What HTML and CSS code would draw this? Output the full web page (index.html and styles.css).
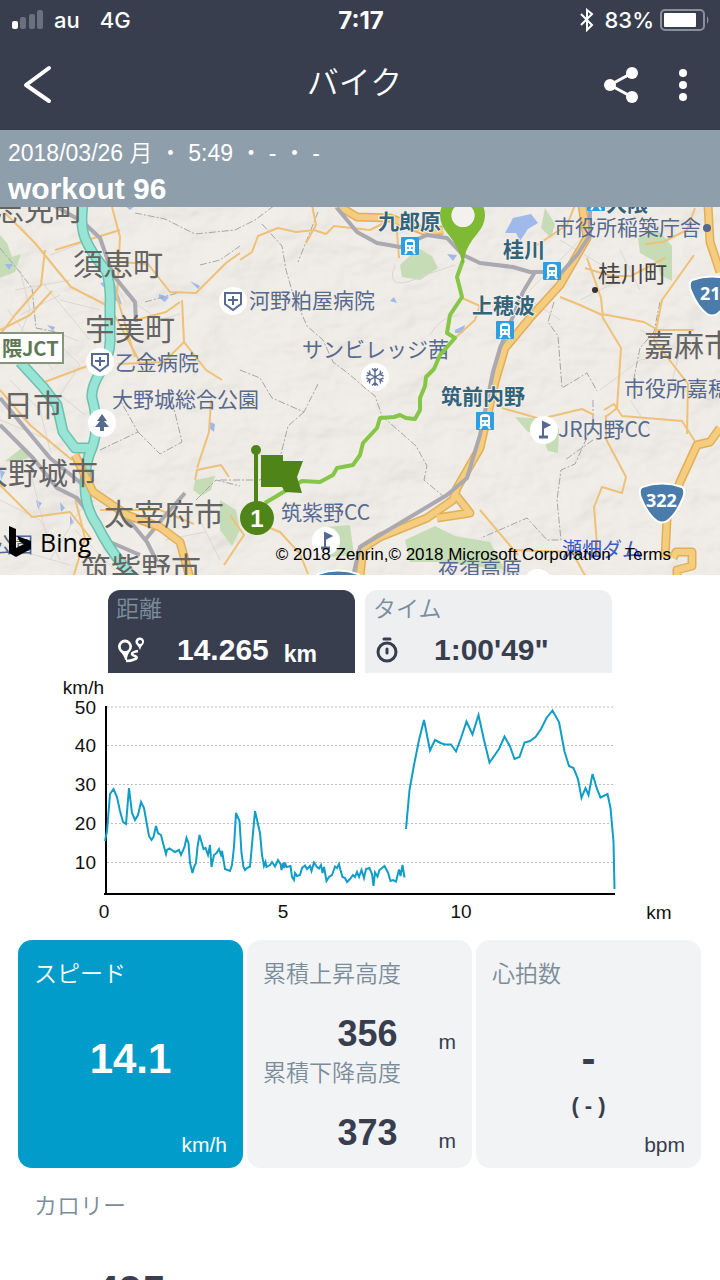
FILE: index.html
```
<!DOCTYPE html>
<html lang="ja">
<head>
  <meta charset="UTF-8">
  <title>バイク - workout 96</title>
  <meta name="viewport" content="width=device-width, initial-scale=1.0">
  <link rel="stylesheet" href="styles.css">
</head>
<body>
<div class="status">
  <div class="status-left">
    <svg width="32" height="20" viewBox="0 0 32 20">
      <rect x="0" y="11" width="6" height="8" rx="2" fill="#fff"/>
      <g fill="#6b707d"><rect x="8" y="7" width="6" height="12" rx="2"/><rect x="17" y="4" width="6" height="15" rx="2"/><rect x="25" y="0" width="6" height="19" rx="2"/></g>
    </svg>
    <span>au</span><span class="net">4G</span>
  </div>
  <time>7:17</time>
  <div class="status-right">
    <svg width="14" height="24" viewBox="0 0 14 24" fill="none" stroke="#fff" stroke-width="2"><path d="M1 6l11 11-5 5V2l5 4L1 17"/></svg>
    <span>83%</span>
    <svg width="50" height="22" viewBox="0 0 50 22">
      <rect x="1" y="1" width="43" height="20" rx="4" fill="none" stroke="#8b8f99" stroke-width="2"/>
      <rect x="4" y="4" width="32" height="14" rx="1" fill="#fff"/>
      <path d="M47 7q3 4 0 8z" fill="#8b8f99"/>
    </svg>
  </div>
</div>

<header>
  <button class="back" aria-label="戻る"><svg width="30" height="40" viewBox="0 0 30 40"><path d="M27 3L4 20l23 16" fill="none" stroke="#fff" stroke-width="4" stroke-linecap="round" stroke-linejoin="round"/></svg></button>
  <h1>バイク</h1>
  <div class="actions">
    <button aria-label="共有"><svg width="36" height="38" viewBox="0 0 36 38"><path d="M29 7L7 19l22 12" fill="none" stroke="#fff" stroke-width="3"/><g fill="#fff"><circle cx="29" cy="7" r="6"/><circle cx="7" cy="19" r="6"/><circle cx="29" cy="31" r="6"/></g></svg></button>
    <button aria-label="メニュー"><svg width="8" height="32" viewBox="0 0 8 32" fill="#fff"><circle cx="4" cy="4" r="4"/><circle cx="4" cy="16" r="4"/><circle cx="4" cy="28" r="4"/></svg></button>
  </div>
</header>

<main>
<section class="info">
  <p>2018/03/26 月 ・ 5:49 ・ - ・ -</p>
  <h2>workout 96</h2>
</section>

<section class="map">
  <svg class="map-tiles" viewBox="0 207 720 368">
    <defs>
      <filter id="relief" x="0" y="0" width="100%" height="100%">
        <feTurbulence type="fractalNoise" baseFrequency="0.014 0.02" numOctaves="4" seed="8"/>
        <feDiffuseLighting surfaceScale="10" lighting-color="#fffaf2"><feDistantLight azimuth="225" elevation="62"/></feDiffuseLighting>
      </filter>
      <g id="spot"><circle r="14" fill="#fff"/></g>
      <g id="hospital"><use href="#spot"/><path d="M-8-8H8V3L0 9-8 3zM0-5V4M-5-1H5" fill="none" stroke="#56698f" stroke-width="2"/></g>
      <g id="golf"><use href="#spot"/><path d="M-1 7V-8L5-5-1-2" fill="#56698f" stroke="#56698f" stroke-width="2"/><path d="M-5 7H4" stroke="#56698f" stroke-width="3"/></g>
      <g id="train"><rect x="-9" y="-9" width="18" height="18" rx="1" fill="#2a9fe6"/><path d="M-5 5V-4q0-3 5-3t5 3V5z" fill="#fff"/><path d="M-3-4H3V-1H-3z" fill="#2a9fe6"/><path d="M-3 5l-2 3M3 5l2 3" stroke="#fff" stroke-width="2"/><circle cx="-2" cy="2" r="1" fill="#2a9fe6"/><circle cx="2" cy="2" r="1" fill="#2a9fe6"/></g>
      <path id="shield" d="M-20-15Q0-22 20-15Q24-12 21-4Q14 13 5 19Q0 22-5 19Q-14 13-21-4Q-24-12-20-15z" fill="#4a7cab" stroke="#fff" stroke-width="2"/>
    </defs>
    <rect y="207" width="720" height="368" fill="#efece7"/>
    <rect y="207" width="720" height="368" filter="url(#relief)" opacity=".16"/>

    <g fill="#c5dcb6">
      <path d="M0 235l7 8 5 14 9-3-6 18-15 6zM400 265l18-17 14 8 6 12-18 12-18-3zM638 238l20-8 14 16v35l-12-6-2-12-18-10zM545 208l10 16-4 14-10-10zM515 417l30 2 14 10-1 24-10-2-5-12-16-8zM195 480l20-4-4 14-10 6-8-6zM220 500l16 10 4 20-8 16-12-16zM325 527l25-2 4 30-24 2zM405 540l30-14 20 10 35 6 15 28-65-8-30 0z"/>
      <path d="M5 461l18-14 6 11-15 4z"/>
    </g>
    <g fill="#9fb9ea">
      <path d="M505 233l8-15 18-4 7 9-10 6-8 12-4-8zM100 283l14-2 8 24-8-6zM159 294l10 3-4 5-6-4zM190 281l10 5-2 3zM447 254l10 1-4 6zM210 422l5 2-1 8-5-4zM390 301l4-4 3 6zM455 330l10-5-2 8-8 0zM47 325l8 2-2 4zM5 264l8 0-4 6z"/>
      <path d="M36 500l6 3-4 6zM60 502l5 6-4 4zM70 515l4 8-4 2zM0 470l5 2-4 8zM124 205l12 0-6 5z"/>
    </g>

    <g class="minor">
      <path d="M50 255l32-12 20 18 24 42M0 345l30 12 28-24 20 8M20 270l10 40-12 30M60 345l20 20-20 30 25 20M10 380l30 30 10 40M130 300l30 20 20-6M0 500l40 20 20 40M30 470l20 80M50 560l30-50 15-10M75 530l40 40M60 300l40 10M15 290l55-10M20 225l40 50"/>
      <path d="M395 265q-12 30 30 10l30-10M430 335q10-18 28-20M580 300l40-20M530 300l30 20M640 330l40 20-10 40M600 390l40-30 30-5M560 240l50 30M620 250l20 40M660 380l50 20M590 230l-60 60M650 430l-20-30M20 315l40-20M8 310l45 60M90 340l-50-60M165 540l40-8M200 520l20 40M0 420l50 20M0 545l70 20"/>
    </g>
    <g class="border">
      <path d="M135 213l30 6 30 15 40-4 20-10 20-15"/>
      <path d="M262 224l20 22 4 24 7 24 14 32 16 14 10 22 16 12 16 14 10 8 7 20 34 30 11 20-3 14 20 17 25 10"/>
      <path d="M0 248l18 22 14 18 4 40 20 4M100 450l38-18-18-32M138 432l22 22 22-12-12-50M318 212l-20 50M240 370l20 8 12 20 32 14 14-28M304 412l-16 14-8 32-20 22H220"/>
      <path d="M554 302l-6 20 10 14 4 52 25-15 10 18M660 302l-6 30-14 16-6 30M593 400v24l-18 40-14 6-4 30 4 40-14 0-20-22-46 20M593 440l-28 20M200 265l20-5 20-14M145 302l36-10M196 500l20-20 24 6"/>
    </g>
    <g class="road">
      <path d="M5 213l30 30 36 44 39 20 30 55M45 250l-4 35-26 30-15 20M112 207l8 30-3 60 18 60M55 250l65-20M120 262l28 2 22 28 26 1 30-30 14-10M180 302l-14 10-30 8M182 300l2 42-20 20-46 2M184 342l22 28 16 10"/>
      <path d="M211 400l-2 32-12 36M195 480l2-10 24-5 8 12M0 485l32 32 38-5 22 28M100 510l60 0 34 14M250 520l30 12 20 22 8 20M240 260l12-8 6-16 20-8 18 4 18-2 12 4 8-8 36 4 20-10M312 205l4 20-10 18M397 232l2 26M462 298l18 8M455 338l20-18 5-15"/>
      <path d="M575 205l-8 20-30 20M585 268l26 8 20 0 34-18M560 297l20 8 22 10M587 258l14 40 2 20 18 30-4 60-10 8M602 314l42 8 14 8 36 0M694 255l-32 45-8 40 34 44-1 50M695 208l-8 22-24 12-18 2M604 410l10-6 8 12 60 5 14 22M606 415l0 24 20 38-4 16-20-6-8 20 4 50M594 415l-12-6-42 10-20-6-18-5M480 510l38 45M510 550l62 2 20 36"/>
      <path d="M0 390l30 35 42 35M0 330l30-15 22-24M90 365l-48 18M75 498l10 40-12 40M230 515l14 20-20 30"/>
    </g>

    <g class="rail">
      <path d="M53 205l30 17 17 16 13 37 22 27 1 20M0 425l33 33 24 30 20 10 33 44 30 13M0 398l50 60 37 30 16 9 30 28 14 17 10 20M145 540l18-22 22-25"/>
    </g>
    <g class="highway">
      <path class="case" d="M83 205q-3 20 2 33t22 34q4 16 3 33v30q2 20-13 43-6 12-5 20 8 28 0 50-7 14-7 37t12 40q12 24 26 40l12 16M20 362l23 25 14 18 6 27 12 16h17"/>
      <path d="M83 205q-3 20 2 33t22 34q4 16 3 33v30q2 20-13 43-6 12-5 20 8 28 0 50-7 14-7 37t12 40q12 24 26 40l12 16M20 362l23 25 14 18 6 27 12 16h17"/>
    </g>
    <g class="trunk">
      <path class="case" d="M75 455l18 37 34 23 33 12 20 15 10 36M337 205l20 12 33 1 37 14 16-2M582 205l5 33-27 47-30 33-25 30-10 34-15 66-23 40-4 12-26 18-47 19-17 11-3 28M455 494l15 19-33 5M708 205l2 37 10 30M720 428l-10 14-13 3-17 37-13 36-2 40M673 558l3-6h16v14l-15 4v8"/>
      <path d="M75 455l18 37 34 23 33 12 20 15 10 36M337 205l20 12 33 1 37 14 16-2M582 205l5 33-27 47-30 33-25 30-10 34-15 66-23 40-4 12-26 18-47 19-17 11-3 28M455 494l15 19-33 5M708 205l2 37 10 30M720 428l-10 14-13 3-17 37-13 36-2 40M673 558l3-6h16v14l-15 4v8"/>
    </g>
    <g class="rail">
      <path d="M337 208l20 24 20 11 23 4 27-12 20 3 16 17 17 8 33 4 17 5h32l15-17 13-20v-30M535 272l-12 20-23 56-7 24-6 30-7 33-13 43-20 17-87 52-7 29"/>
    </g>

    <g class="city">
      <text x="-6" y="220">志免町</text>
      <text x="73" y="275">須恵町</text>
      <text x="85" y="340">宇美町</text>
      <text x="3" y="416">日市</text>
      <text x="-22" y="484">大野城市</text>
      <text x="104" y="525">太宰府市</text>
      <text x="81" y="579">筑紫野市</text>
      <text x="644" y="356">嘉麻市</text>
    </g>
    <text class="town" x="598" y="282">桂川町</text>
    <circle cx="595" cy="290" r="3" fill="#333"/>
    <g class="poi">
      <text x="249" y="308">河野粕屋病院</text>
      <text x="115" y="370">乙金病院</text>
      <text x="112" y="407">大野城総合公園</text>
      <text x="302" y="357">サンビレッジ茜</text>
      <text x="554" y="235">市役所稲築庁舎</text>
      <text x="624" y="396">市役所嘉穂</text>
      <text x="558" y="437">JR内野CC</text>
      <text x="281" y="520">筑紫野CC</text>
      <text x="438" y="577">夜須高原</text>
      <text x="-9" y="552">公園</text>
      <text class="dam" x="562" y="557">瀬畑ダム</text>
    </g>
    <circle cx="707" cy="228" r="4" fill="#56698f"/>
    <g class="station">
      <text x="378" y="229">九郎原</text>
      <text x="503" y="257">桂川</text>
      <text x="472" y="313">上穂波</text>
      <text x="441" y="404">筑前内野</text>
      <text x="606" y="211">大隈</text>
    </g>
    <use href="#train" x="410" y="246"/>
    <use href="#train" x="552" y="271"/>
    <use href="#train" x="505" y="330"/>
    <use href="#train" x="485" y="421"/>
    <use href="#train" x="596" y="202"/>
    <use href="#hospital" x="233" y="301"/>
    <use href="#hospital" x="100" y="362"/>
    <use href="#golf" x="544" y="430"/>
    <use href="#golf" x="326" y="541"/>
    <use href="#spot" x="102" y="423"/>
    <path d="M102 414l5 7h-3l5 6h-5v4h-4v-4h-5l5-6h-3z" fill="#56698f"/>
    <use href="#spot" x="375" y="377"/>
    <use href="#spot" x="538" y="583"/>
    <path d="M375 368v18M367 372.500l16 9M367 381.500l16-9M372 368.500l3 3 3-3M372 385.500l3-3 3 3M366.500 376l3.500-1.500-.5-4M383.500 376l-3.500-1.500.5-4M366.500 378l3.500 1.500-.5 4M383.500 378l-3.500 1.500.5 4" fill="none" stroke="#56698f" stroke-width="1.400"/>
    <rect x="-6" y="333" width="69" height="30" fill="#fff" stroke="#86967a" stroke-width="2"/>
    <text class="jct" x="2" y="356">隈JCT</text>
    <use href="#shield" x="662" y="502"/>
    <use href="#shield" x="712" y="295"/>
    <use href="#shield" x="338" y="589"/>
    <text class="route-no" x="646" y="507">322</text>
    <text class="route-no" x="700" y="300">211</text>

    <path class="track" d="M463 260l-6 17 5 20-12 18-3 18 8 5-15 17-6 14-8 8-1 9-5 12v12l-5 9-9-1-6-3-6 2-14 1-3 10-14 15-3 12-7 10-16 3-4 7-13 7-18-1-37 22"/>
    <path d="M462 263Q460 249 448 234Q440 225 440 215A22.500 22.500 0 0 1 485 215Q485 225 477 234Q464 249 464 263zM463 204a11.500 11.500 0 1 0 .1 0z" fill="#7fba35" fill-rule="evenodd"/>
    <circle cx="463" cy="215.500" r="11.500" fill="#f3f1ed"/>
    <g fill="#4f8518"><path d="M254 450h4v55h-4zM261 455h22v6h20l-6 16 5 16-17-1-3-5h-21z"/><circle cx="256" cy="450" r="5"/><circle cx="257" cy="518" r="17"/></g>
    <text class="lap" x="257" y="527">1</text>
  </svg>
  <div class="bing">
    <svg width="24" height="32" viewBox="0 0 24 32"><path d="M1 0l7 3v19l8-4-4-2-3-6 14 5v8L8 31l-7-4z"/></svg>
    <span>Bing</span>
  </div>
  <div class="credits"><span>© 2018 Zenrin,© 2018 Microsoft Corporation</span><a href="#terms">Terms</a></div>
</section>

<div class="tabs">
  <button class="tab active">
    <span class="label">距離</span>
    <span class="row">
      <svg width="28" height="26" viewBox="0 0 28 26"><path d="M9 23Q8 18 4 14.500A7 7 0 1 1 14 14.500Q11 18 11 23zM9 5.500a4.300 4.300 0 1 0 .1 0zM24 13Q23 10 21 8A4.300 4.300 0 1 1 26.500 8Q24.500 10 24 13zM24 3a2 2 0 1 0 .1 0z" fill="#fff" fill-rule="evenodd"/><path d="M22 14q-6 1-6 3 0 1 3 2 4 2-1 3.500-3 1.500-8 1.500" fill="none" stroke="#fff" stroke-width="2.600"/></svg>
      <strong>14.265</strong><small>km</small>
    </span>
  </button>
  <button class="tab">
    <span class="label">タイム</span>
    <span class="row">
      <svg width="28" height="26" viewBox="0 0 28 26" fill="none" stroke="#383e4e"><circle cx="14" cy="15" r="9" stroke-width="3"/><path d="M11 2h6M14 12v4" stroke-width="3" stroke-linecap="round"/></svg>
      <strong>1:00'49"</strong>
    </span>
  </button>
</div>

<svg class="chart" viewBox="0 673 720 260">
  <path class="grid" d="M107 707H615M107 745.500H615M107 784.500H615M107 823.500H615M107 862.500H615"/>
  <g class="ylabels">
    <text x="104" y="694">km/h</text>
    <text x="96" y="714">50</text>
    <text x="96" y="752">40</text>
    <text x="96" y="791">30</text>
    <text x="96" y="830">20</text>
    <text x="96" y="869">10</text>
  </g>
  <g class="xlabels">
    <text x="104" y="918">0</text>
    <text x="283" y="918">5</text>
    <text x="461" y="918">10</text>
    <text x="659" y="919">km</text>
  </g>
  <path class="axis" d="M106 706V894M104 894H615"/>
  <polyline points="105,841 107,831 110,794 113.5,789 117,797 120,811 123,822 126,824 129,788 132,813 135,820 138,815 141,802 144,808 147,825 149,836 151.5,840 153.5,837 156,826 158,833 161,835 163,843 166,854 167,850 169.5,848.5 175,852 179,850 181,855 184.5,847 186.5,838 188.5,843 190,863 192.5,873 194,867 196,863 197.5,847 199.5,835 201.5,842 203.5,849 205.5,848 208,855 210,845 211.5,867 214,855 216.5,853 219,849 221,855 222,851 225,869 230,871 232,865 234,847 236,813 239.5,821 241.5,853 243.5,867 245,870 247,868 250,866.5 251.5,850 255,811 257.5,822 260,833 262,855 264,866 265.5,862 266.5,867 270,865 272,862 275,866.5 278,860 280.5,864 281.5,870 283,863 284,868 285,862.5 286.5,867 290.5,866 292,877 294,880 295,873 297,876 300,875 302,868 305,865.5 307,869 310,866 311.5,871 314,862.5 317,867 319,868.5 321,865 322.5,873 324,867 326.5,881 329,877 332,875 335,866.5 337,868 339,864 340.5,870 342.5,877 345,878 347,882 350,879 353,875 355,877 357,872 359,877 361.5,870 364,878 366,869 369.5,868 372,874 373.5,886 375,872.5 377.5,876.5 379.5,870 384.5,866 388,872.5 390.5,881 393,880 396,881.5 399,869.5 400.5,876 402.5,865 404.5,877.5"/>
  <polyline points="406,829 409.5,790 414,765 419,740 424,720 430,750.5 435,740 440.5,743 445,744.5 451,744.5 456,751.5 461,738 466.5,721.5 472.5,734.5 478.5,715 484,740 489.5,762.5 499,749 504.5,736.5 510,746.5 514.5,759 519.5,757 524.5,742.5 530,741 535.5,737 541,729 546.5,718 552.5,710.5 559,722 564.5,751.5 569,766 573.5,768 578,779 581.5,798 585.5,788 588.5,795 592.5,774 597,789 600.5,797.5 607.5,794 610.5,808 613.5,841.5 614.5,889"/>
</svg>

<section class="cards">
  <article class="card speed">
    <h3>スピード</h3>
    <p class="value">14.1</p>
    <p class="unit">km/h</p>
  </article>
  <article class="card">
    <h3>累積上昇高度</h3>
    <p class="climb"><strong>356</strong><span>m</span></p>
    <h3>累積下降高度</h3>
    <p class="climb"><strong>373</strong><span>m</span></p>
  </article>
  <article class="card">
    <h3>心拍数</h3>
    <p class="value">-</p>
    <p class="sub">( - )</p>
    <p class="unit">bpm</p>
  </article>
  <article class="card plain">
    <h3>カロリー</h3>
    <p class="value">495</p>
    <p class="unit">kcal</p>
  </article>
</section>
</main>
</body>
</html>
```

FILE: styles.css
```
* { box-sizing: border-box; }
body { margin: 0; height: 100vh; overflow: hidden; display: flex; flex-direction: column; background: #fff; color: #383e4e; font-family: "Liberation Sans", "Noto Sans CJK JP", sans-serif; }
h1, h2, h3, p { margin: 0; }
button { border: none; background: none; padding: 0; font: inherit; color: inherit; cursor: pointer; }
svg { display: block; flex: none; }

.status { flex: none; display: grid; grid-template-columns: 1fr auto 1fr; align-items: center; height: 40px; padding: 0 10px 0 12px; background: #383e4e; color: #fff; font-family: Inter, sans-serif; font-size: 22px; font-weight: 500; }
.status time { font-size: 24px; font-weight: 700; }
.status-left { display: flex; align-items: center; gap: 10px; }
.status-left .net { margin-left: 10px; }
.status-right { display: flex; align-items: center; justify-content: flex-end; gap: 6px; }
.status-right span { margin-left: 5px; }

header { flex: none; display: grid; grid-template-columns: 1fr auto 1fr; align-items: center; height: 90px; padding: 0 33px 0 22px; background: #383e4e; color: #fff; }
header h1 { font-size: 32px; font-weight: 350; line-height: 40px; padding-bottom: 4px; }
header button { display: block; }
.actions { display: flex; justify-content: flex-end; align-items: center; gap: 40px; }

main { flex: 1; min-height: 0; overflow: hidden; }
.info { padding: 7px 8px 1px; background: #8f9eab; color: #fff; }
.info p { font-size: 23px; line-height: 32px; font-weight: 350; }
.info h2 { padding-top: 2px; font-size: 30px; line-height: 35px; }

.map { position: relative; }
.map-tiles { width: 100%; height: auto; font-family: "Noto Sans CJK JP", sans-serif; }
.minor path { fill: none; stroke: #dcd8cf; stroke-width: 1; }
.border path { fill: none; stroke: #a5a5a5; stroke-width: 1; stroke-dasharray: 7 2 2 2; }
.road path { fill: none; stroke: #efc077; stroke-width: 2; stroke-linejoin: round; }
.rail path { fill: none; stroke: #aaa8b0; stroke-width: 4; stroke-linejoin: round; }
.highway path { fill: none; stroke: #98e4d5; stroke-width: 8; stroke-linejoin: round; }
.trunk path { fill: none; stroke: #f5cd7e; stroke-width: 6; stroke-linejoin: round; }
.highway path.case { stroke: #6cc0ad; stroke-width: 11; }
.trunk path.case { stroke: #e2ae59; stroke-width: 9; }
.track { fill: none; stroke: #86c646; stroke-width: 4; stroke-linejoin: round; }
.city { font-size: 30px; fill: #646464; }
.town { font-size: 23px; fill: #444; }
.poi { font-size: 21px; fill: #56698f; }
.poi .dam { font-size: 20px; fill: #3f5cc4; }
.station { font-size: 21px; font-weight: 700; fill: #33637a; stroke: #f3f1ec; stroke-width: 2; paint-order: stroke; }
.jct { font-size: 20px; font-weight: 700; fill: #5d7a52; }
.route-no { font-family: "Noto Sans", sans-serif; font-size: 18px; font-weight: 700; fill: #fff; }
.lap { font-family: "Liberation Sans", sans-serif; font-size: 24px; font-weight: 700; fill: #fff; text-anchor: middle; }

/* logo and copyright lie over the tiles */
.bing { position: absolute; left: 8px; bottom: 15px; display: flex; align-items: center; gap: 8px; color: #000; font: 25px/36px "Open Sans", sans-serif; }
.credits { position: absolute; right: 49px; bottom: 9px; display: flex; gap: 14px; color: #000; font-size: 17px; line-height: 22px; }
.credits a { color: inherit; text-decoration: none; }

.tabs { display: flex; justify-content: center; gap: 10px; padding-top: 15px; }
.tab { width: 247px; height: 83px; padding: 4px 8px; border-radius: 12px 12px 0 0; background: #edeff1; text-align: left; }
.tab.active { background: #383e4e; color: #fff; }
.tab .label { display: block; font-size: 23px; line-height: 30px; font-weight: 350; color: #7b8d9b; }
.tab .row { display: flex; align-items: center; height: 52px; }
.tab strong { margin-left: 33px; font-size: 30px; }
.tab small { margin: 8px 0 0 15px; font-size: 23px; font-weight: 700; }

.chart { width: 100%; height: auto; font-size: 19px; }
.chart text { fill: #111; }
.chart polyline { fill: none; stroke: #109dc8; stroke-width: 2; }
.grid { stroke: #bbb; stroke-width: 1; stroke-dasharray: 2 2; }
.axis { stroke: #000; stroke-width: 2; }
.ylabels { text-anchor: end; }
.xlabels { text-anchor: middle; }

.cards { display: grid; grid-template-columns: repeat(3, 1fr); gap: 4px; padding: 7px 19px 0 18px; }
.card { display: flex; flex-direction: column; height: 228px; padding: 18px 16px 8px; border-radius: 14px; background: #f2f3f5; }
.card h3 { font-size: 23px; line-height: 32px; font-weight: 350; color: #7b8d9b; }
.card .value { margin-top: 42px; font-size: 42px; line-height: 54px; font-weight: 700; text-align: center; }
.card .sub { font-size: 22px; line-height: 40px; font-weight: 700; text-align: center; }
.card .unit { margin-top: auto; font-size: 21px; line-height: 30px; text-align: right; }
.climb { display: flex; justify-content: flex-end; align-items: center; height: 67px; }
.climb strong { width: 101px; padding-top: 20px; font-size: 36px; line-height: 48px; }
.climb span { padding-top: 36px; font-size: 21px; line-height: 24px; }
.card.speed { background: #029cca; color: #fff; }
.card.speed h3 { color: #fff; }
.card.plain { background: none; }
```
